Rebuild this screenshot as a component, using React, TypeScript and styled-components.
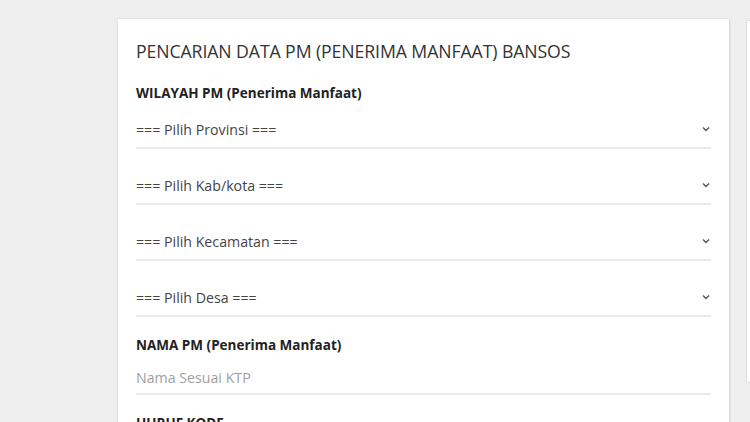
import React from "react";
import styled, { createGlobalStyle } from "styled-components";

const Global = createGlobalStyle`
  html, body { margin: 0; padding: 0; background: #efefef; overflow: hidden; }
  body { font-family: "Open Sans", "Noto Sans", sans-serif; }
  * { box-sizing: border-box; }
`;

const Page = styled.div`
  display: flex;
  align-items: flex-start;
  gap: 17px;
  padding: 19px 0 0 118px;
  width: 750px;
  height: 422px;
  overflow: hidden;
`;

const Card = styled.div`
  flex: 0 0 611px;
  background: #fff;
  box-shadow: 0 0 2px rgba(0, 0, 0, 0.12), 1px 1px 2px rgba(0, 0, 0, 0.08);
  padding: 20px 18px 40px 18px;
  min-height: 500px;
`;

const Side = styled.div`
  flex: 0 0 40px;
  margin-top: 1px;
  height: 363px;
  background: #fff;
  border: 1px solid #dcdcdc;
  border-radius: 2px;
`;

const Title = styled.h1`
  margin: 0 0 20px 0;
  font-size: 17.7px;
  font-weight: 400;
  color: #333;
  line-height: 24px;
  letter-spacing: -0.1px;
`;

const Label = styled.div<{ $top?: number }>`
  font-size: 13.5px;
  font-weight: 700;
  color: #222;
  line-height: 20px;
  margin-top: ${(p) => p.$top ?? 0}px;
`;

const Selects = styled.div`
  display: flex;
  flex-direction: column;
  gap: 18px;
  margin-top: 8px;
`;

const SelectRow = styled.div`
  display: flex;
  align-items: center;
  justify-content: space-between;
  height: 38px;
  border-bottom: 2px solid #ebebeb;
  font-size: 14.2px;
  color: #444;
  padding-right: 1px;
`;

const InputRow = styled.div`
  display: flex;
  align-items: flex-end;
  height: 40px;
  padding-bottom: 5px;
  line-height: 20px;
  border-bottom: 2px solid #ebebeb;
  font-size: 14.2px;
  color: #a0a0a0;
`;

const Chevron = () => (
  <svg width="8" height="6" viewBox="0 0 8 6">
    <polyline points="1,1.5 4,4.5 7,1.5" fill="none" stroke="#555" strokeWidth="1.4" />
  </svg>
);

const selects = [
  "=== Pilih Provinsi ===",
  "=== Pilih Kab/kota ===",
  "=== Pilih Kecamatan ===",
  "=== Pilih Desa ===",
];

export default function App() {
  return (
    <>
      <Global />
      <Page>
        <Card>
          <Title>PENCARIAN DATA PM (PENERIMA MANFAAT) BANSOS</Title>
          <Label>WILAYAH PM (Penerima Manfaat)</Label>
          <Selects>
            {selects.map((s) => (
              <SelectRow key={s}>
                <span>{s}</span>
                <Chevron />
              </SelectRow>
            ))}
          </Selects>
          <Label $top={18}>NAMA PM (Penerima Manfaat)</Label>
          <InputRow>Nama Sesuai KTP</InputRow>
          <Label $top={18}>HURUF KODE</Label>
        </Card>
        <Side />
      </Page>
    </>
  );
}
